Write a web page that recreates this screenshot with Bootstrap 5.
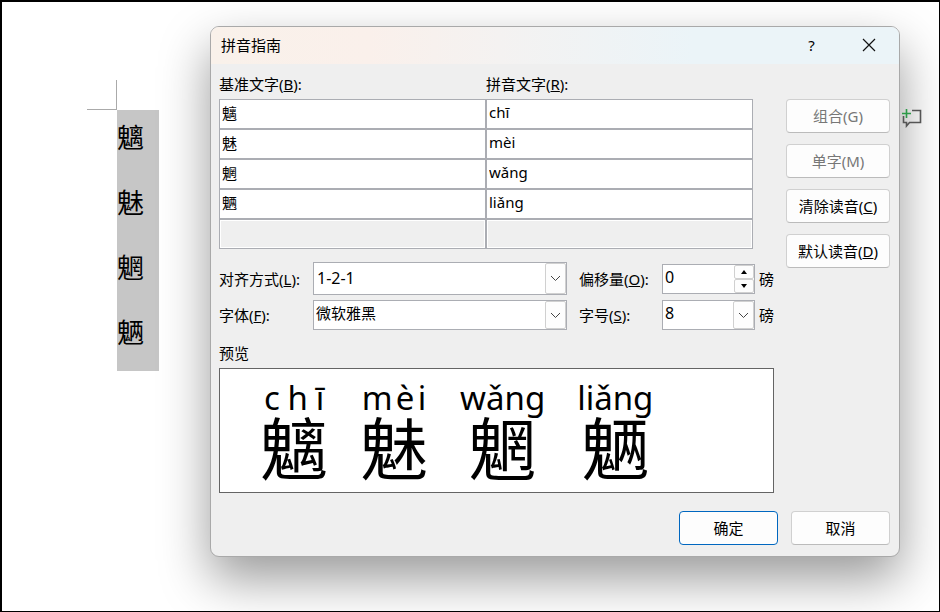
<!DOCTYPE html>
<html lang="zh-CN">
<head>
<meta charset="utf-8">
<meta name="viewport" content="width=device-width, initial-scale=1">
<title>拼音指南</title>
<link href="https://cdn.jsdelivr.net/npm/bootstrap@5.3.0/dist/css/bootstrap.min.css" rel="stylesheet">
<style>
:root { --line: #abadb3; --face: #efefef; --soft: #d0d0d0; }
body { font-family: "Noto Sans", "Noto Sans CJK SC", sans-serif; font-size: 15px; line-height: 20px; color: #000; background: #fff; }
.workspace { min-height: 100vh; border: solid #000; border-width: 2px 1px 1px 2px; }
.page-side { flex: 0 0 208px; padding: 78px 0 0 85px; }
.crop-mark { width: 30px; height: 30px; border: solid #aaa; border-width: 0 1px 1px 0; }
.selected-text { width: 42px; margin-left: 30px; background: #c6c6c6; font-size: 27px; padding-bottom: 1px; }
.selected-text p { height: 65px; line-height: 55px; }
.margin-side { flex: 0 0 39px; padding: 106px 0 0 2px; }
.dialog-window { margin-top: 24px; background: var(--face); border: 1px solid #a9a9a9; border-radius: 9px; box-shadow: 0 22px 50px rgba(0,0,0,.4); }
.title-strip { height: 37px; padding: 0 2px 2px 10px; border-radius: 8px 8px 0 0; background: linear-gradient(90deg, #f9f1ea 0%, #faf0eb 23%, #f4f2f1 42%, #ebf4f8 70%, #ebf4f8 100%); }
.title-strip h1 { font-size: 15px; line-height: 20px; }
.title-strip button { width: 57px; height: 34px; border: 0; background: none; color: #000; }
.dialog-content { padding: 0 9px 11px 8px; }
.ruby-table { width: calc(100% - 21px); table-layout: fixed; border-collapse: separate; border-spacing: 0; }
.ruby-table th { height: 35px; padding: 5px 0 0; font-weight: 400; }
.ruby-table td { padding: 0; }
.field { display: block; width: 100%; height: 30px; border: 1px solid var(--line); border-radius: 0; background: #fff; color: #000; padding: 0 2px 4px; outline: 0; appearance: none; }
.ruby-table .field:disabled { background: var(--face); box-shadow: inset 0 0 0 1px #fff; }
.settings { margin-top: 13px; grid-template-columns: 94px minmax(0,1fr) 95px 93px 19px; row-gap: 5px; }
.settings .second { padding-left: 12px; }
.settings .unit { padding-left: 4px; }
.settings .digits { font-size: 16px; }
.combo > * { grid-area: 1 / 1; }
.combo .tall { height: 33px; padding: 0 3px 1px; }
.drop-face { justify-self: end; width: 21px; margin: 1px; border: 1px solid var(--soft); background: #fdfdfd; border-radius: 2px; pointer-events: none; }
.step-box { justify-self: end; width: 20px; margin: 1px; }
.step-box button { border: 1px solid var(--soft); background: #fdfdfd; border-radius: 2px; }
input[type=number] { appearance: textfield; }
input[type=number]::-webkit-inner-spin-button { appearance: none; }
.preview-label { padding: 13px 0 5px; }
.preview-box { min-height: 125px; border: 1px solid #646464; background: #fff; padding: 11px 0 0 40px; gap: 32px; }
.syllable { min-width: 68px; }
.reading { font-size: 33px; line-height: 36px; }
.base-char { font-size: 68px; line-height: 66px; }
.side-buttons { width: 104px; margin-left: 12px; padding-top: 35px; gap: 11px; }
.push { height: 34px; font-size: 15px; line-height: 20px; padding: 0; border: 1px solid var(--soft); border-bottom-color: #bbb; border-radius: 4px; background: #fdfdfd; color: #000; }
.push:disabled { background: #fdfdfd; color: #777; border-color: var(--soft); border-bottom-color: #bbb; opacity: 1; }
.footer-row { margin-top: 18px; gap: 13px; }
.footer-row .push { width: 99px; }
.footer-row .primary { border-color: #0067c0; }
svg { display: block; }
</style>
<script src="https://cdn.jsdelivr.net/npm/bootstrap@5.3.0/dist/js/bootstrap.bundle.min.js"></script>
</head>
<body>
<main class="workspace d-flex align-items-start overflow-hidden">
  <section class="page-side" aria-label="文档">
    <div class="crop-mark"></div>
    <div class="selected-text">
      <p class="m-0">魑</p><p class="m-0">魅</p><p class="m-0">魍</p><p class="m-0">魉</p>
    </div>
  </section>

  <form class="dialog-window flex-grow-1" role="dialog" aria-labelledby="dialog-title" onsubmit="return false">
    <header class="title-strip d-flex align-items-center">
      <h1 id="dialog-title" class="m-0 fw-normal me-auto">拼音指南</h1>
      <button type="button" aria-label="帮助">?</button>
      <button type="button" class="d-flex align-items-center justify-content-center" aria-label="关闭">
        <svg width="14" height="14" viewBox="0 0 14 14" fill="none" stroke="#111" stroke-width="1.2"><path d="M1 1l12 12M13 1L1 13"/></svg>
      </button>
    </header>

    <div class="dialog-content">
      <div class="d-flex justify-content-between">
        <div class="flex-grow-1">
          <table class="ruby-table">
            <thead><tr>
              <th scope="col"><label for="base1">基准文字(<u>B</u>):</label></th>
              <th scope="col"><label for="ruby1">拼音文字(<u>R</u>):</label></th>
            </tr></thead>
            <tbody>
              <tr><td><input class="field" id="base1" value="魑"></td><td><input class="field" id="ruby1" value="chī"></td></tr>
              <tr><td><input class="field" aria-label="基准文字 2" value="魅"></td><td><input class="field" aria-label="拼音文字 2" value="mèi"></td></tr>
              <tr><td><input class="field" aria-label="基准文字 3" value="魍"></td><td><input class="field" aria-label="拼音文字 3" value="wǎng"></td></tr>
              <tr><td><input class="field" aria-label="基准文字 4" value="魉"></td><td><input class="field" aria-label="拼音文字 4" value="liǎng"></td></tr>
              <tr><td><input class="field" aria-label="基准文字 5" disabled></td><td><input class="field" aria-label="拼音文字 5" disabled></td></tr>
            </tbody>
          </table>

          <div class="settings d-grid align-items-center">
            <label for="align">对齐方式(<u>L</u>):</label>
            <div class="combo d-grid">
              <select class="field tall digits" id="align"><option>1-2-1</option></select>
              <span class="drop-face d-flex align-items-center justify-content-center"><svg width="11" height="7" viewBox="0 0 11 7" fill="none" stroke="#444"><path d="M1 1l4.500 4.500L10 1"/></svg></span>
            </div>
            <label class="second" for="offset">偏移量(<u>O</u>):</label>
            <div class="combo d-grid">
              <input class="field digits" id="offset" type="number" value="0">
              <span class="step-box d-flex flex-column">
                <button type="button" class="flex-fill d-flex align-items-center justify-content-center p-0" aria-label="增加"><svg width="8" height="4" viewBox="0 0 8 4"><path d="M4 0l3 4H1z"/></svg></button>
                <button type="button" class="flex-fill d-flex align-items-center justify-content-center p-0" aria-label="减少"><svg width="8" height="4" viewBox="0 0 8 4"><path d="M1 0h6L4 4z"/></svg></button>
              </span>
            </div>
            <span class="unit">磅</span>

            <label for="face">字体(<u>F</u>):</label>
            <div class="combo d-grid">
              <select class="field" id="face"><option>微软雅黑</option></select>
              <span class="drop-face d-flex align-items-center justify-content-center"><svg width="11" height="7" viewBox="0 0 11 7" fill="none" stroke="#444"><path d="M1 1l4.500 4.500L10 1"/></svg></span>
            </div>
            <label class="second" for="size">字号(<u>S</u>):</label>
            <div class="combo d-grid">
              <select class="field digits" id="size"><option>8</option></select>
              <span class="drop-face d-flex align-items-center justify-content-center"><svg width="11" height="7" viewBox="0 0 11 7" fill="none" stroke="#444"><path d="M1 1l4.500 4.500L10 1"/></svg></span>
            </div>
            <span class="unit">磅</span>
          </div>

          <div class="preview-label">预览</div>
          <div class="preview-box d-flex">
            <div class="syllable text-center"><div class="reading d-flex justify-content-around"><span>c</span><span>h</span><span>ī</span></div><div class="base-char">魑</div></div>
            <div class="syllable text-center"><div class="reading d-flex justify-content-around"><span>m</span><span>è</span><span>i</span></div><div class="base-char">魅</div></div>
            <div class="syllable text-center"><div class="reading">wǎng</div><div class="base-char">魍</div></div>
            <div class="syllable text-center"><div class="reading">liǎng</div><div class="base-char">魉</div></div>
          </div>
        </div>

        <div class="side-buttons d-flex flex-column flex-shrink-0">
          <button type="button" class="btn push" disabled>组合(G)</button>
          <button type="button" class="btn push" disabled>单字(M)</button>
          <button type="button" class="btn push">清除读音(<u>C</u>)</button>
          <button type="button" class="btn push">默认读音(<u>D</u>)</button>
        </div>
      </div>

      <div class="footer-row d-flex justify-content-end">
        <button type="submit" class="btn push primary">确定</button>
        <button type="button" class="btn push">取消</button>
      </div>
    </div>
  </form>

  <aside class="margin-side">
    <svg width="20" height="20" viewBox="0 0 20 20" fill="none" role="img" aria-label="新建批注">
      <path d="M10 2.500h8.500v12H7.500L4.500 18v-3.500H1.500V8" stroke="#555" stroke-width="1.600"/>
      <path d="M4.500 1v9M0 5.500h9" stroke="#2c9a48" stroke-width="1.600"/>
    </svg>
  </aside>
</main>
</body>
</html>
